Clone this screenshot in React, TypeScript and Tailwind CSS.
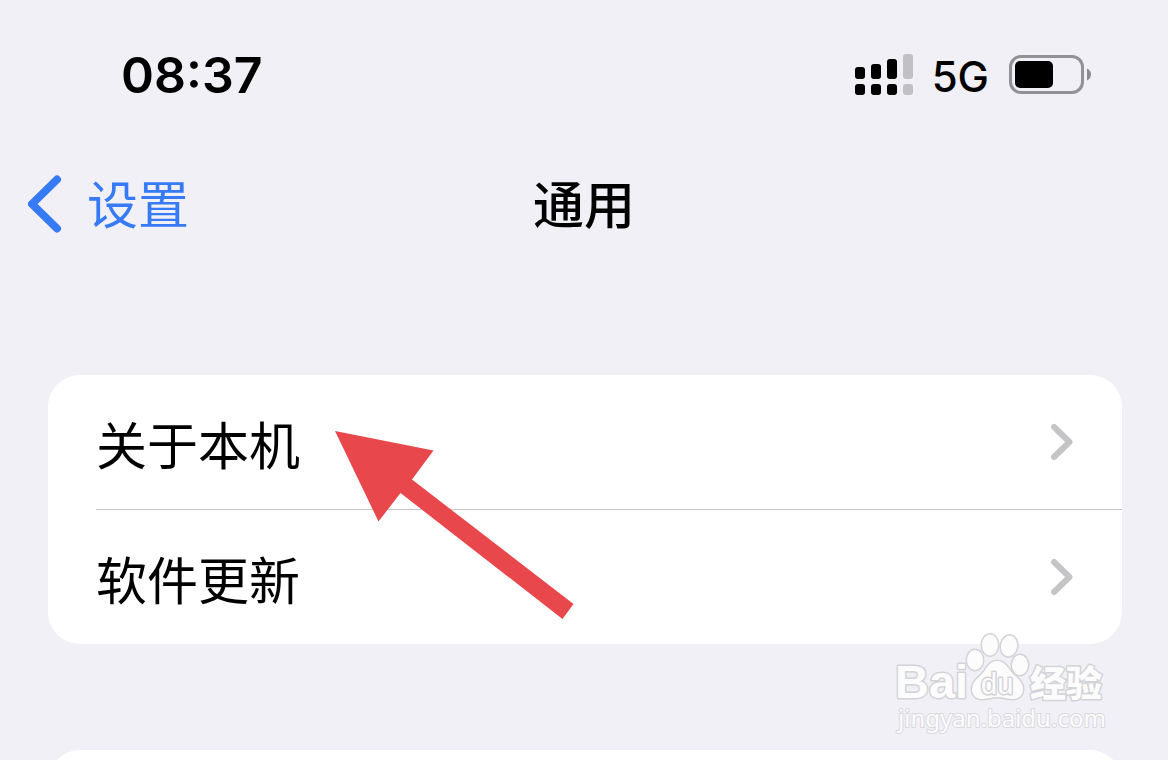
import React from 'react';

const SignalIcon: React.FC = () => (
  <svg width="58" height="42" viewBox="0 0 58 42" role="img" aria-label="Signal">
    <g fill="#000">
      <rect x="0" y="13" width="10" height="12" rx="3" />
      <rect x="16" y="10" width="10" height="15" rx="3" />
      <rect x="32" y="5" width="10" height="20" rx="3" />
      <rect x="0" y="30" width="10" height="11" rx="3" />
      <rect x="16" y="30" width="10" height="11" rx="3" />
      <rect x="32" y="30" width="10" height="11" rx="3" />
    </g>
    <g fill="#c1c0c5">
      <rect x="48" y="0" width="10" height="25" rx="3" />
      <rect x="48" y="30" width="10" height="11" rx="3" />
    </g>
  </svg>
);

const BatteryIcon: React.FC = () => (
  <svg width="82" height="40" viewBox="0 0 82 40" role="img" aria-label="Battery">
    <rect x="1.5" y="1.5" width="72" height="36" rx="10.5" fill="none" stroke="#929196" strokeWidth="3" />
    <rect x="6" y="6" width="38" height="27" rx="5" fill="#000" />
    <path d="M78 13.5c2.4 1 4 3.3 4 6s-1.600 5-4 6z" fill="#8b8a8f" />
  </svg>
);

const StatusBar: React.FC = () => (
  <div className="flex items-center justify-between h-[150px] pl-[121px] pr-[77px]">
    <time className="text-[50px] leading-none font-semibold">08:37</time>
    <div className="flex items-center">
      <SignalIcon />
      <span className="ml-[19px] mr-5 pt-1 text-[42px] leading-none font-medium">5G</span>
      <BatteryIcon />
    </div>
  </div>
);

const NavBar: React.FC = () => (
  <header className="grid grid-cols-3 items-center h-[110px] px-7">
    <a href="#settings" className="flex items-center gap-[25px] text-[#367bf5] text-[51px] leading-none">
      <svg width="34" height="60" viewBox="0 0 34 60" fill="none" stroke="currentColor" strokeWidth="8" strokeLinecap="round" strokeLinejoin="round" aria-hidden="true">
        <path d="M29 4.500 4 29l25 24.500" />
      </svg>
      <span>设置</span>
    </a>
    <h1 className="text-center text-[51px] leading-none font-medium">通用</h1>
  </header>
);

const rows = [
  { label: '关于本机', href: '#about' },
  { label: '软件更新', href: '#update' },
];

const SettingsList: React.FC = () => (
  <div className="relative ml-12 mr-[46px] mt-[115px] rounded-[32px] bg-white pl-12">
    <ul className="divide-y divide-[#c6c6c8]">
      {rows.map((row) => (
        <li key={row.label}>
          <a href={row.href} className="flex items-center justify-between h-[134px] pr-[49px] text-[51px] leading-none">
            <span className="pt-2">{row.label}</span>
            <svg width="23" height="38" viewBox="0 0 23 38" fill="none" stroke="#c5c5c7" strokeWidth="6" strokeLinecap="round" strokeLinejoin="round" aria-hidden="true">
              <path d="M4 4l15.500 15L4 34" />
            </svg>
          </a>
        </li>
      ))}
    </ul>
    {/* pointer laid over the first row */}
    <svg className="absolute left-[286px] top-[55px]" width="242" height="192" viewBox="0 0 242 192" aria-hidden="true">
      <path d="M1 1 99.500 20.500 78 49.500 239.500 174 228.500 189 66.500 63 44.500 91.500z" fill="#e8474b" />
    </svg>
  </div>
);

const Watermark: React.FC = () => (
  <svg className="absolute right-[57px] bottom-[19px]" width="220" height="110" viewBox="0 0 220 110" role="img" aria-label="Baidu">
    <g fill="#fcfcfd" stroke="#d3d3d8" strokeWidth="3" paintOrder="stroke" strokeLinejoin="round">
      <text x="4" y="67" fontFamily="'Liberation Sans', sans-serif" fontWeight="700" fontSize="47">Bai</text>
      <ellipse cx="84" cy="29" rx="8" ry="10" />
      <ellipse cx="99" cy="14" rx="8" ry="10.500" />
      <ellipse cx="118" cy="15" rx="8" ry="10.500" transform="rotate(10 118 15)" />
      <ellipse cx="129" cy="34" rx="8" ry="10" />
      <path d="M106 30c-8 0-10 7-14 12-5 5-11 9-11 16 0 6 4 10 10 10 5 0 10-2 15-2s11 2 16 2c6 0 10-4 10-10 0-7-6-11-11-16-4-5-7-12-15-12z" />
      <text x="90" y="63" fontFamily="'Liberation Sans', sans-serif" fontSize="29">du</text>
      <text x="139" y="66" fontFamily="'Noto Sans CJK SC', sans-serif" fontWeight="900" fontSize="36">经验</text>
    </g>
    <text x="7" y="96" fill="#fcfcfd" stroke="#d9d9de" strokeWidth="2" paintOrder="stroke" fontFamily="'Noto Sans', sans-serif" fontSize="24">jingyan.baidu.com</text>
  </svg>
);

const App: React.FC = () => {
  return (
    <main className="relative h-screen overflow-hidden bg-[#f1f0f6] text-black font-[Inter,'Noto_Sans_CJK_SC',sans-serif]">
      <StatusBar />
      <NavBar />
      <SettingsList />
      <div className="ml-12 mr-[46px] mt-[106px] h-[134px] rounded-[32px] bg-white"></div>
      <Watermark />
    </main>
  );
};

export default App;
